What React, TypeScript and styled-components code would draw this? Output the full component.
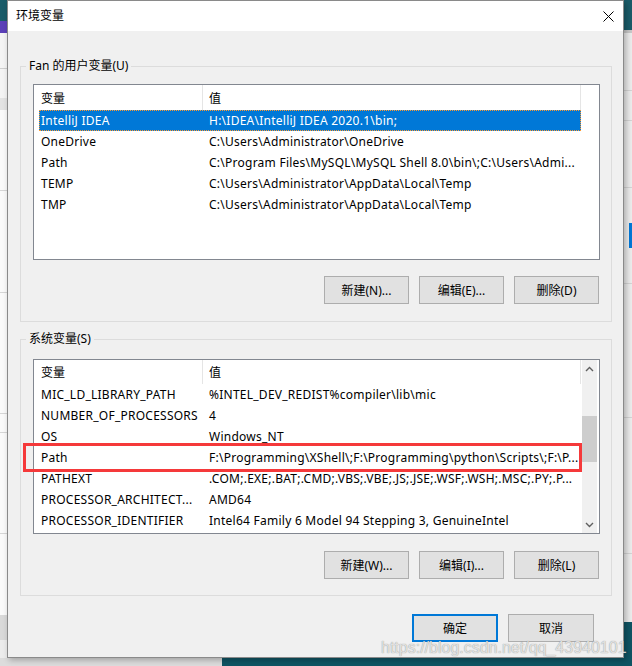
import React from "react";
import styled, { createGlobalStyle } from "styled-components";

const GlobalStyle = createGlobalStyle`
  html, body { margin: 0; padding: 0; }
  body { width: 632px; height: 666px; overflow: hidden; background: #0f5463; }
  *, *::before, *::after { box-sizing: border-box; }
`;

const UI_FONT = `"Noto Sans", "Noto Sans CJK SC", sans-serif`;

const Desktop = styled.div`
  position: relative;
  width: 632px;
  height: 666px;
  display: grid;
  grid-template-columns: 7px 617px 8px;
  grid-template-rows: 658px 8px;
  overflow: hidden;
  font-family: ${UI_FONT};
  background: #0f5463;
`;

const LeftBackdrop = styled.div`
  background: linear-gradient(
    to bottom,
    #1a5c69 0 21px,
    #5b40b8 21px 33px,
    #f4f4f4 33px 68px,
    #cfcfcf 68px 69px,
    #f4f4f4 69px 98px,
    #e3e3e3 98px 110px,
    #fafafa 110px 190px,
    #d6d6d6 190px 191px,
    #fafafa 191px 292px,
    #d6d6d6 292px 293px,
    #fafafa 293px 413px,
    #d6d6d6 413px 414px,
    #fafafa 414px 432px,
    #d6d6d6 432px 433px,
    #fafafa 433px 533px,
    #d6d6d6 533px 534px,
    #fafafa 534px 615px,
    #d9d9d9 615px 640px,
    #ececec 640px
  );
`;

const RightBackdrop = styled.div`
  background:
    linear-gradient(#0078d7, #0078d7) right 0 top 223px / 3px 25px no-repeat,
    linear-gradient(
      to bottom,
      #1a5c69 0 30px,
      #c8c8c8 30px 33px,
      #ececec 33px 90px,
      #d4d4d4 90px 91px,
      #ececec 91px 120px,
      #d4d4d4 120px 121px,
      #ececec 121px 187px,
      #d4d4d4 187px 188px,
      #ececec 188px 283px,
      #d4d4d4 283px 284px,
      #ececec 284px 417px,
      #d4d4d4 417px 418px,
      #ececec 418px 553px,
      #d4d4d4 553px 554px,
      #ececec 554px 622px,
      #0f5463 622px
    );
`;

const BottomStrip = styled.div`
  grid-column: 1 / -1;
  background: linear-gradient(to right, #dcdcdc 0 222px, #0f5463 222px);
`;

const Dialog = styled.div`
  position: relative;
  z-index: 1;
  display: flex;
  flex-direction: column;
  border: 1px solid #8a8a8a;
  background: #f0f0f0;
  box-shadow: 2px 2px 6px rgba(0, 0, 0, 0.28);
`;

const TitleBar = styled.div`
  height: 30px;
  display: flex;
  align-items: center;
  background: #ffffff;
  padding-left: 8px;
`;

const TitleText = styled.span`
  font-size: 12px;
  line-height: 16px;
  color: #000;
`;

const CloseBox = styled.div`
  margin-left: auto;
  width: 30px;
  height: 30px;
  display: flex;
  align-items: center;
  justify-content: center;
`;

const DialogBody = styled.div`
  display: flex;
  flex-direction: column;
  padding: 27px 11px 15px 12px;
`;

const GroupBox = styled.fieldset<{ $pt: number; $pb: number; $mt: number }>`
  margin: ${(p) => p.$mt}px 0 0 0;
  min-width: 0;
  border: 1px solid #dcdcdc;
  padding: ${(p) => p.$pt}px 11px ${(p) => p.$pb}px 12px;
  display: flex;
  flex-direction: column;
`;

const GroupLegend = styled.legend`
  margin-left: -7px;
  padding: 0 3px;
  font-size: 12px;
  line-height: 16px;
  color: #000;
`;

const ListFrame = styled.div`
  position: relative;
`;

const ListView = styled.div<{ $h: number }>`
  height: ${(p) => p.$h}px;
  border: 1px solid #828790;
  background: #ffffff;
  display: flex;
  overflow: hidden;
`;

const ListColumns = styled.div`
  flex: 1;
  min-width: 0;
  display: flex;
  flex-direction: column;
  overflow: hidden;
`;

const HeaderRow = styled.div<{ $h: number }>`
  flex-shrink: 0;
  height: ${(p) => p.$h}px;
  display: grid;
  grid-template-columns: 169px 378px;
`;

const HeaderCell = styled.div<{ $pl: number }>`
  display: flex;
  align-items: center;
  padding-left: ${(p) => p.$pl}px;
  border-right: 1px solid #e5e5e5;
  font-size: 12px;
  color: #000;
  white-space: nowrap;
`;

const Row = styled.div<{ $selected?: boolean }>`
  flex-shrink: 0;
  margin-left: 5px;
  width: 542px;
  height: 21px;
  display: grid;
  grid-template-columns: 164px 378px;
  align-items: center;
  background: ${(p) => (p.$selected ? "#0078d7" : "transparent")};
  color: ${(p) => (p.$selected ? "#ffffff" : "#000000")};
  outline: ${(p) => (p.$selected ? "1px dotted #ff9a30" : "none")};
  outline-offset: -1px;
`;

const Cell = styled.div<{ $pl: number }>`
  padding-left: ${(p) => p.$pl}px;
  font-size: 12px;
  letter-spacing: 0.25px;
  line-height: 21px;
  white-space: nowrap;
  overflow: hidden;
`;

const ScrollBar = styled.div`
  flex-shrink: 0;
  width: 15px;
  margin: 0 2px 0 1px;
  background: #f0f0f0;
  display: flex;
  flex-direction: column;
`;

const ScrollArrow = styled.div`
  height: 17px;
  display: flex;
  align-items: center;
  justify-content: center;
`;

const ScrollTrack = styled.div<{ $offset: number }>`
  flex: 1;
  padding-top: ${(p) => p.$offset}px;
`;

const ScrollThumb = styled.div<{ $h: number }>`
  height: ${(p) => p.$h}px;
  background: #cdcdcd;
`;

const ButtonRow = styled.div<{ $mt: number; $pr: number }>`
  display: flex;
  justify-content: flex-end;
  gap: 10px;
  margin-top: ${(p) => p.$mt}px;
  padding-right: ${(p) => p.$pr}px;
`;

const WinButton = styled.button<{ $w: number; $default?: boolean }>`
  width: ${(p) => p.$w}px;
  height: 28px;
  padding: 0;
  margin: 0;
  background: #e1e1e1;
  border: ${(p) => (p.$default ? "2px solid #0078d7" : "1px solid #adadad")};
  font-family: ${UI_FONT};
  font-size: 12px;
  color: #000;
`;

const Annotation = styled.div`
  position: absolute;
  left: -10px;
  top: 84px;
  width: 559px;
  height: 29px;
  border: 3px solid #f5393a;
  pointer-events: none;
`;

const Watermark = styled.div`
  position: absolute;
  left: 381px;
  top: 638px;
  z-index: 2;
  font-family: "Liberation Sans", Arial, sans-serif;
  font-size: 16px;
  line-height: 20px;
  white-space: nowrap;
  color: rgba(236, 236, 236, 0.9);
  text-shadow: 0 0 1px rgba(90, 90, 90, 0.75);
`;

type Item = { name: string; value: string; selected?: boolean };

const userVars: Item[] = [
  { name: "IntelliJ IDEA", value: "H:\\IDEA\\IntelliJ IDEA 2020.1\\bin;", selected: true },
  { name: "OneDrive", value: "C:\\Users\\Administrator\\OneDrive" },
  { name: "Path", value: "C:\\Program Files\\MySQL\\MySQL Shell 8.0\\bin\\;C:\\Users\\Admi..." },
  { name: "TEMP", value: "C:\\Users\\Administrator\\AppData\\Local\\Temp" },
  { name: "TMP", value: "C:\\Users\\Administrator\\AppData\\Local\\Temp" },
];

const sysVars: Item[] = [
  { name: "MIC_LD_LIBRARY_PATH", value: "%INTEL_DEV_REDIST%compiler\\lib\\mic" },
  { name: "NUMBER_OF_PROCESSORS", value: "4" },
  { name: "OS", value: "Windows_NT" },
  { name: "Path", value: "F:\\Programming\\XShell\\;F:\\Programming\\python\\Scripts\\;F:\\P..." },
  { name: "PATHEXT", value: ".COM;.EXE;.BAT;.CMD;.VBS;.VBE;.JS;.JSE;.WSF;.WSH;.MSC;.PY;.P..." },
  { name: "PROCESSOR_ARCHITECT...", value: "AMD64" },
  { name: "PROCESSOR_IDENTIFIER", value: "Intel64 Family 6 Model 94 Stepping 3, GenuineIntel" },
];

const Chevron: React.FC<{ up?: boolean }> = ({ up }) => (
  <svg width="9" height="6" viewBox="0 0 9 6">
    <polyline
      points={up ? "1,5 4.5,1.5 8,5" : "1,1 4.5,4.5 8,1"}
      fill="none"
      stroke="#606060"
      strokeWidth="1.4"
    />
  </svg>
);

const VarList: React.FC<{ items: Item[]; height: number; headerH: number; scroll?: boolean }> = ({
  items,
  height,
  headerH,
  scroll,
}) => (
  <ListView $h={height}>
    <ListColumns>
      <HeaderRow $h={headerH}>
        <HeaderCell $pl={7}>变量</HeaderCell>
        <HeaderCell $pl={6}>值</HeaderCell>
      </HeaderRow>
      {items.map((it) => (
        <Row key={it.name + it.value} $selected={it.selected}>
          <Cell $pl={2}>{it.name}</Cell>
          <Cell $pl={6}>{it.value}</Cell>
        </Row>
      ))}
    </ListColumns>
    {scroll && (
      <ScrollBar>
        <ScrollArrow>
          <Chevron up />
        </ScrollArrow>
        <ScrollTrack $offset={39}>
          <ScrollThumb $h={46} />
        </ScrollTrack>
        <ScrollArrow>
          <Chevron />
        </ScrollArrow>
      </ScrollBar>
    )}
  </ListView>
);

export default function App() {
  return (
    <>
      <GlobalStyle />
      <Desktop>
        <LeftBackdrop />
        <Dialog>
          <TitleBar>
            <TitleText>环境变量</TitleText>
            <CloseBox>
              <svg width="11" height="11" viewBox="0 0 11 11">
                <path d="M0.5 0.5 L10.5 10.5 M10.5 0.5 L0.5 10.5" stroke="#000" strokeWidth="1" />
              </svg>
            </CloseBox>
          </TitleBar>
          <DialogBody>
            <GroupBox $pt={10} $pb={17} $mt={0}>
              <GroupLegend>Fan 的用户变量(U)</GroupLegend>
              <ListFrame>
                <VarList items={userVars} height={176} headerH={25} />
              </ListFrame>
              <ButtonRow $mt={16} $pr={1}>
                <WinButton $w={85}>新建(N)...</WinButton>
                <WinButton $w={85}>编辑(E)...</WinButton>
                <WinButton $w={85}>删除(D)</WinButton>
              </ButtonRow>
            </GroupBox>
            <GroupBox $pt={12} $pb={16} $mt={9}>
              <GroupLegend>系统变量(S)</GroupLegend>
              <ListFrame>
                <VarList items={sysVars} height={175} headerH={24} scroll />
                <Annotation />
              </ListFrame>
              <ButtonRow $mt={17} $pr={1}>
                <WinButton $w={85}>新建(W)...</WinButton>
                <WinButton $w={85}>编辑(I)...</WinButton>
                <WinButton $w={85}>删除(L)</WinButton>
              </ButtonRow>
            </GroupBox>
            <ButtonRow $mt={18} $pr={18}>
              <WinButton $w={86} $default>
                确定
              </WinButton>
              <WinButton $w={86}>取消</WinButton>
            </ButtonRow>
          </DialogBody>
        </Dialog>
        <RightBackdrop />
        <BottomStrip />
        <Watermark>https://blog.csdn.net/qq_43940101</Watermark>
      </Desktop>
    </>
  );
}
